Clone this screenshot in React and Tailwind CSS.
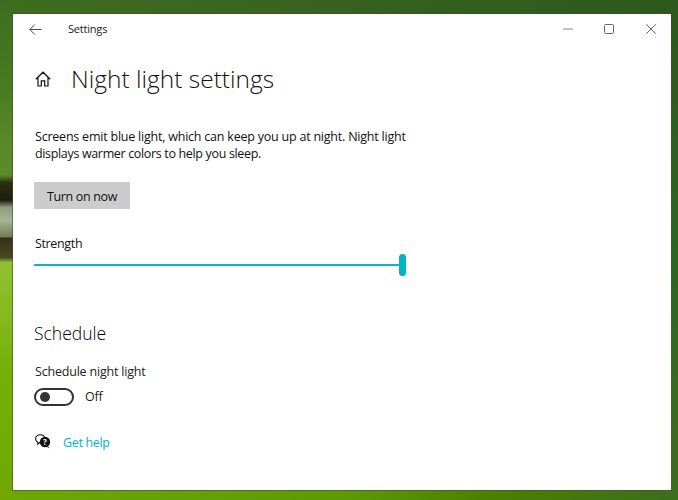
export default function App() {
  return (
    <div className="flex w-[678px] h-[500px] overflow-hidden font-['Open_Sans',sans-serif]">
      <div className="w-[13px] h-full bg-[linear-gradient(180deg,#3f6d1f_0%,#47781f_15%,#5a8a28_30%,#5f8a2a_35%,#2c2f12_36.5%,#1c1c0c_40%,#8f9c7c_41.5%,#a8b498_44%,#6c8050_47.4%,#33301a_47.6%,#4a4724_51.5%,#8fc030_52.5%,#86ba20_62%,#74ae06_75%,#70a800_100%)]" />
      <div className="flex-1 flex flex-col bg-[linear-gradient(90deg,#6ca804_0%,#5c9a05_50%,#4a8000_72%,#3c6e1c_100%)]">
        <div className="h-[14px] bg-[linear-gradient(90deg,#3f6d1f,#36621e_50%,#2c581c)]" />
        <div className="flex-1 flex">
          <div className="flex-1 flex flex-col bg-white shadow-[0_0_0_1px_rgba(70,70,70,0.6)] text-black">
            <div className="flex items-center h-[30px] text-[11px] tracking-[-0.2px] text-[#222]">
              <svg width="13" height="11" viewBox="0 0 13 11" className="ml-[16px] mr-[26px]" fill="none" stroke="#333" strokeWidth="0.9">
                <path d="M0.8 5.5H12.5M5.7 0.6L0.8 5.5L5.7 10.4" />
              </svg>
              <span>Settings</span>
              <div className="ml-auto flex items-center mr-[15px]">
                <svg width="10" height="2" viewBox="0 0 10 2"><path d="M0 1H10" stroke="#999" strokeWidth="1.2" /></svg>
                <svg width="10" height="10" viewBox="0 0 10 10" className="ml-[31px]"><rect x="0.5" y="0.5" width="9" height="9" rx="1" fill="none" stroke="#666" /></svg>
                <svg width="10" height="10" viewBox="0 0 10 10" className="ml-[32px]"><path d="M0.3 0.3L9.7 9.7M9.7 0.3L0.3 9.7" stroke="#555" strokeWidth="0.9" /></svg>
              </div>
            </div>
            <div className="flex items-center mt-[19px] h-[32px] pl-[22px]">
              <svg width="16" height="16" viewBox="0 0 16 16" fill="none" stroke="#111" strokeWidth="1.2">
                <path d="M0.8 8.2L8 1.2L15.2 8.2M3 6.5V15H6.3V9.8H9.7V15H13V6.5" />
              </svg>
              <h1 className="ml-[20px] text-[24.5px] font-light text-[#111] leading-[32px]">Night light settings</h1>
            </div>
            <div className="pl-[21px]">
              <p className="mt-[33px] pl-px text-[12.5px] leading-[17px] tracking-[-0.22px] text-[#111]">Screens emit blue light, which can keep you up at night. Night light<br /><span className="tracking-[-0.34px]">displays warmer colors to help you sleep.</span></p>
              <button className="mt-[20px] block w-[96px] h-[27px] pt-[3px] bg-[#cccccc] text-[12.5px] tracking-[-0.35px] text-[#111]">Turn on now</button>
              <div className="mt-[26px] pl-px text-[12.5px] leading-[17px] tracking-[-0.35px] text-[#111]">Strength</div>
              <div className="mt-[2px] flex items-center w-[372px] h-[22px]">
                <div className="flex-1 h-[2px] bg-[#0ab5c5]" />
                <div className="w-[7px] h-[22px] rounded-full bg-[#00b4c4]" />
              </div>
              <h2 className="mt-[45px] text-[17.5px] font-[350] leading-[24px] text-black">Schedule</h2>
              <div className="mt-[18px] pl-px text-[12.5px] leading-[17px] tracking-[-0.2px] text-[#222]">Schedule night light</div>
              <div className="mt-[8px] flex items-center h-[18px]">
                <div className="flex items-center w-[40px] h-[18px] rounded-full border-2 border-[#333] pl-[4px]">
                  <div className="w-[10px] h-[10px] rounded-full bg-[#333]" />
                </div>
                <span className="ml-[11px] text-[12.5px] tracking-[-0.2px] text-[#222]">Off</span>
              </div>
              <div className="mt-[28px] flex items-center h-[18px]">
                <svg width="16" height="15" viewBox="0 0 16 15" fill="none" className="mb-[3px] ml-px mr-[-1px]">
                  <path d="M5.2 8.6H4.5L2.8 10.2V8.2C1.4 7.5 0.6 6.4 0.6 5C0.6 2.6 2.6 0.7 5.4 0.7C7.2 0.7 8.8 1.5 9.6 2.8" stroke="#111" strokeWidth="1.1" />
                  <circle cx="10" cy="8" r="5.2" fill="#111" />
                  <path d="M12.6 12L15 14.6L12 13Z" fill="#111" />
                  <text x="10" y="10.8" textAnchor="middle" fontSize="8" fontWeight="700" fill="#fff" fontFamily="Open Sans">?</text>
                </svg>
                <a className="ml-[13px] text-[12.5px] tracking-[-0.35px] text-[#00b4c4]">Get help</a>
              </div>
            </div>
          </div>
          <div className="w-[7px] bg-[linear-gradient(180deg,#2c581c,#2e661c_50%,#3c6e1c)]" />
        </div>
        <div className="h-[10px]" />
      </div>
    </div>
  );
}
